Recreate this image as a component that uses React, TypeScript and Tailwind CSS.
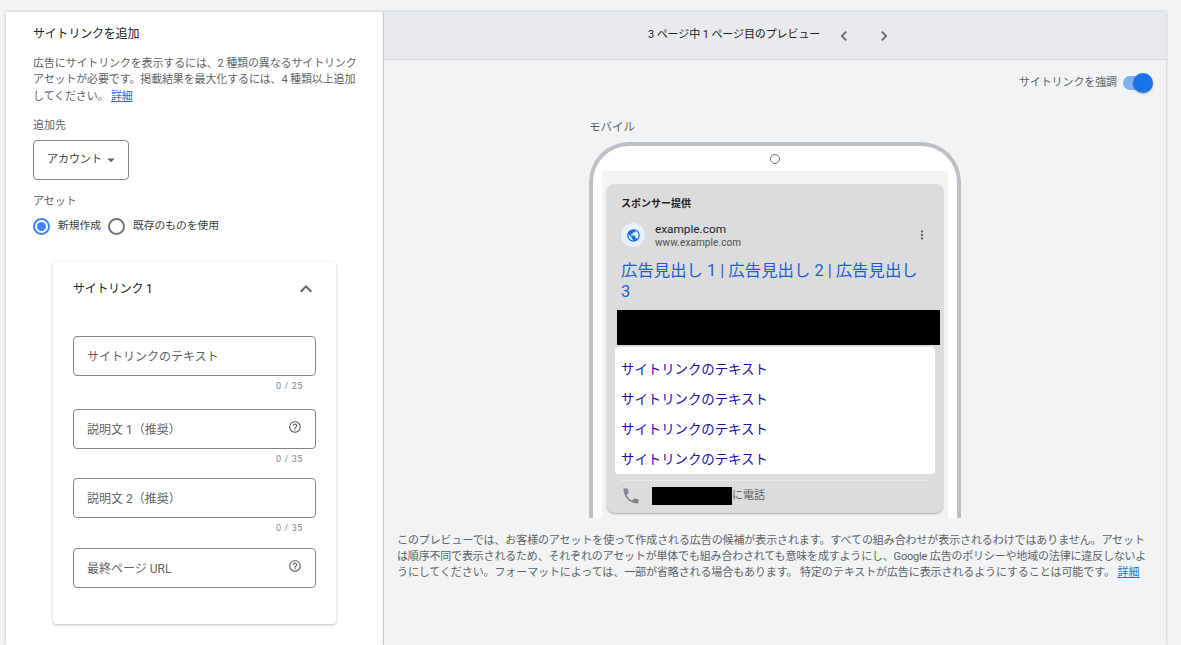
import { MdArrowDropDown, MdChevronLeft, MdChevronRight, MdExpandLess, MdHelpOutline, MdMoreVert, MdPhone, MdPublic } from 'react-icons/md';

const fontFamily = 'font-["Roboto","Noto_Sans_CJK_JP",sans-serif]';

const SitelinkInput = ({ label, help, counter }: { label: string; help?: boolean; counter?: string }) => (
  <div>
    <div className="flex h-10 w-[243px] items-center justify-between rounded border border-[#80868b] pl-[13px] pr-[13px]">
      <span className="pt-[2px] text-[12px] text-[#5f6368]">{label}</span>
      {help && <MdHelpOutline className="mb-[4px] text-[14px] text-[#5f6368]" />}
    </div>
    {counter && <div className="mt-[2px] h-[17px] w-[230px] text-right text-[9px] leading-[16px] tracking-[0.6px] text-[#80868b]">{counter}</div>}
  </div>
);

const LeftPanel = () => (
  <div className="h-full w-[377px] bg-white pl-[27px] pt-[14px] shadow-[0_0_3px_rgba(60,64,67,0.3)]">
    <h2 className="text-[12px] font-normal leading-[16px] tracking-[-0.2px] text-[#202124]">サイトリンクを追加</h2>
    <p className="mt-[14px] w-[335px] text-[11px] leading-[16.4px] tracking-[-0.14px] text-[#5f6368]">
      広告にサイトリンクを表示するには、2 種類の異なるサイトリンク<br />
      アセットが必要です。掲載結果を最大化するには、4 種類以上追加<br />
      してください。 <a className="text-[#1a73e8] underline">詳細</a>
    </p>
    <div className="mt-[12.3px] text-[11px] leading-[16px] text-[#5f6368]">追加先</div>
    <div className="mt-[6px] flex h-10 w-24 items-center rounded border border-[#80868b] pl-[13px]">
      <span className="pt-[2px] text-[11px] text-[#3c4043]">アカウント</span>
      <MdArrowDropDown className="text-[18px] text-[#5f6368]" />
    </div>
    <div className="mt-[14px] text-[11px] leading-[16px] text-[#5f6368]">アセット</div>
    <div className="mt-[8px] flex h-[18px] items-center">
      <span className="flex h-[17px] w-[17px] items-center justify-center rounded-full border-2 border-[#4285f4]">
        <span className="h-[9px] w-[9px] rounded-full bg-[#4285f4]" />
      </span>
      <span className="ml-2 text-[10.75px] text-[#3c4043]">新規作成</span>
      <span className="ml-[7px] h-[17px] w-[17px] rounded-full border-2 border-[#70757a]" />
      <span className="ml-2 text-[10.75px] text-[#3c4043]">既存のものを使用</span>
    </div>
    <section className="ml-[20px] mt-[26px] h-[362px] w-[283px] rounded bg-white pl-5 shadow-[0_1px_3px_rgba(60,64,67,0.35)]">
      <div className="flex items-center justify-between pr-[18px] pt-[15px]">
        <span className="text-[12px] leading-[20px] tracking-[-0.3px] text-[#202124]">サイトリンク 1</span>
        <MdExpandLess className="text-[24px] text-[#5f6368]" />
      </div>
      <div className="mt-[35px] flex flex-col">
        <SitelinkInput label="サイトリンクのテキスト" counter="0 / 25" />
        <div className="mt-[14px]"><SitelinkInput label="説明文 1（推奨）" help counter="0 / 35" /></div>
        <div className="mt-[10px]"><SitelinkInput label="説明文 2（推奨）" counter="0 / 35" /></div>
        <div className="mt-[11px]"><SitelinkInput label="最終ページ URL" help /></div>
      </div>
    </section>
  </div>
);

const Phone = () => (
  <div className="ml-[205px] h-[376px] w-[372px] overflow-hidden rounded-t-[40px] border-x-4 border-t-4 border-[#bdc1c6] bg-white">
    <div className="flex h-[25px] items-start justify-center pt-[8px]">
      <span className="h-[10px] w-[10px] rounded-full border border-[#70757a]" />
    </div>
    <div className="mx-[9px] h-[348px] bg-[#f1f3f4] px-[5px] pt-[13px]">
      <div className="h-[329px] w-[336px] rounded-lg bg-[#dcdcdc] shadow-[0_1px_2px_rgba(60,64,67,0.4)]">
        <div className="pl-[14px] pt-[13px] text-[10px] font-bold leading-[14px] text-[#202124]">スポンサー提供</div>
        <div className="mt-[10px] flex items-center pl-[14px] pr-[14px]">
          <span className="flex h-6 w-6 items-center justify-center rounded-full bg-[#e8f0fe]">
            <MdPublic className="text-[15px] text-[#1a73e8]" />
          </span>
          <div className="ml-[10px] flex-1">
            <div className="text-[11.8px] leading-[16px] text-[#202124]">example.com</div>
            <div className="text-[10px] leading-[12px] tracking-[0.1px] text-[#4d5156]">www.example.com</div>
          </div>
          <MdMoreVert className="text-[14px] text-[#5f6368]" />
        </div>
        <div className="mt-[11px] pl-[14px] text-[16.4px] leading-[21px] text-[#1a5fd8]">
          広告見出し 1 | 広告見出し 2 | 広告見出し<br />3
        </div>
        <div className="ml-[10px] mt-[8px] h-[35px] w-[323px] bg-black" />
        <div className="ml-2 mt-[2px] h-[127px] w-[320px] rounded-sm bg-white pl-[6px] pt-[8px]">
          {[0, 1, 2, 3].map(i => (
            <div key={i} className="h-[30px] text-[13.4px] leading-[30px] text-[#1a0dab]">サイトリンクのテキスト</div>
          ))}
        </div>
        <div className="mx-[14px] mt-[6px] border-t border-[#e8eaed]" />
        <div className="mt-[5px] flex items-center pl-[14px]">
          <MdPhone className="text-[20px] text-[#80868b]" />
          <span className="ml-[11px] h-[18px] w-20 bg-black" />
          <span className="text-[11px] text-[#5f6368]">に電話</span>
        </div>
      </div>
    </div>
  </div>
);

const RightPanel = () => (
  <div className="h-full w-[782px] bg-[#f1f3f4] shadow-[0_0_3px_rgba(60,64,67,0.3)]">
    <header className="flex h-[48px] items-center border-b border-[#dadce0] bg-[#e8eaed] pl-[264px]">
      <span className="text-[11px] tracking-[-0.1px] text-[#202124]">3 ページ中 1 ページ目のプレビュー</span>
      <MdChevronLeft className="ml-[14px] text-[20px] text-[#5f6368]" />
      <MdChevronRight className="ml-[20px] text-[20px] text-[#5f6368]" />
    </header>
    <div className="flex items-center justify-end pr-[15px] pt-[13px]">
      <span className="text-[11px] leading-[20px] tracking-[-0.1px] text-[#5f6368]">サイトリンクを強調</span>
      <span className="relative ml-[6px] h-[14px] w-[28px] rounded-full bg-[#80b0ee]">
        <span className="absolute -top-[3px] right-[-2px] h-5 w-5 rounded-full bg-[#1a73e8] shadow-[0_1px_2px_rgba(60,64,67,0.4)]" />
      </span>
    </div>
    <div className="ml-[205px] mt-[26px] text-[11.5px] leading-[16px] text-[#5f6368]">モバイル</div>
    <div className="mt-[7px]"><Phone /></div>
    <p className="ml-[13px] mt-[15px] whitespace-nowrap text-[11px] leading-[16px] text-[#5f6368]">
      <span className="tracking-[-0.1px]">このプレビューでは、お客様のアセットを使って作成される広告の候補が表示されます。すべての組み合わせが表示されるわけではありません。アセット</span><br />
      <span className="tracking-[-0.18px]">は順序不同で表示されるため、それぞれのアセットが単体でも組み合わされても意味を成すようにし、Google 広告のポリシーや地域の法律に違反しないよ</span><br />
      <span className="tracking-[-0.1px]">うにしてください。フォーマットによっては、一部が省略される場合もあります。 特定のテキストが広告に表示されるようにすることは可能です。 </span><a className="text-[#1a73e8] underline">詳細</a>
    </p>
  </div>
);

export default function App() {
  return (
    <div className={`flex h-[645px] w-[1181px] overflow-hidden bg-[#f1f3f4] pl-[6px] pt-3 ${fontFamily}`}>
      <LeftPanel />
      <div className="w-px" />
      <RightPanel />
    </div>
  );
}
